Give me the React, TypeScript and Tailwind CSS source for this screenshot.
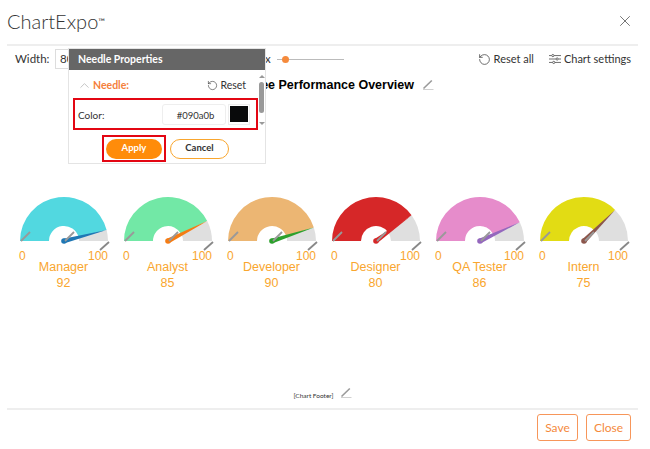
import { RotateCcw, X, ChevronUp } from "lucide-react";

interface GaugeProps {
  name: string;
  value: number;
  color: string;
  needle: string;
}

const gauges: GaugeProps[] = [
  { name: "Manager", value: 92, color: "#52d8e0", needle: "#1f77b4" },
  { name: "Analyst", value: 85, color: "#72e8a6", needle: "#f57c14" },
  { name: "Developer", value: 90, color: "#ecb673", needle: "#2ca02c" },
  { name: "Designer", value: 80, color: "#d62728", needle: "#d62728" },
  { name: "QA Tester", value: 86, color: "#e68ccb", needle: "#9467bd" },
  { name: "Intern", value: 75, color: "#e2dc14", needle: "#8c564b" },
];

const CX = 52;
const CY = 45;
const OUTER = 44;
const INNER = 15;

function point(pct: number, r: number) {
  const a = Math.PI - (pct / 100) * Math.PI;
  return [CX + r * Math.cos(a), CY - r * Math.sin(a)];
}

function arc(from: number, to: number) {
  const [x1, y1] = point(from, OUTER);
  const [x2, y2] = point(to, OUTER);
  const [x3, y3] = point(to, INNER);
  const [x4, y4] = point(from, INNER);
  return `M${x1} ${y1}A${OUTER} ${OUTER} 0 0 1 ${x2} ${y2}L${x3} ${y3}A${INNER} ${INNER} 0 0 0 ${x4} ${y4}Z`;
}

function Pencil({ className }: { className?: string }) {
  return (
    <svg viewBox="0 0 12 12" className={className} fill="none">
      <path d="M1 10.5h10.5" stroke="#c4c4c4" strokeWidth="0.8" />
      <path d="M1.5 9.5 9.8 1.5" stroke="#9a9a9a" strokeWidth="1.6" />
    </svg>
  );
}

function SlidersIcon() {
  return (
    <svg viewBox="0 0 14 13" className="h-[12px] w-[12px]" fill="none" stroke="#444" strokeWidth="0.9">
      <path d="M0 2.5h3M6 2.5h8M0 6.5h8M11 6.5h3M0 10.5h4M7 10.5h7" />
      <circle cx="4.5" cy="2.5" r="1.3" />
      <circle cx="9.5" cy="6.5" r="1.3" />
      <circle cx="5.5" cy="10.5" r="1.3" />
    </svg>
  );
}

function Gauge({ name, value, color, needle }: GaugeProps) {
  const [tx, ty] = point(value, OUTER);
  const a = Math.PI - (value / 100) * Math.PI;
  const nx = Math.sin(a) * 2.4;
  const ny = Math.cos(a) * 2.4;
  return (
    <div className="flex w-[104px] shrink-0 flex-col items-center font-['Liberation_Sans',sans-serif] text-[12.5px] leading-4 text-[#f9a62e]">
      <svg viewBox="0 0 104 56" className="h-14 w-[104px]">
        <path d={arc(0, value)} fill={color} />
        <path d={arc(value, 100)} fill="#dfdfdf" />
        <path d={`M${CX - nx} ${CY - ny}L${tx} ${ty}L${CX + nx} ${CY + ny}Z`} fill={needle} />
        <circle cx={CX} cy={CY} r="2.8" fill={needle} />
        <path d="M9 45 18 36" stroke="#999" strokeWidth="1.8" />
        <path d="M53 45 62 36" stroke="#999" strokeWidth="1.8" />
        <path d="M88 54 97 46" stroke="#888" strokeWidth="1.8" />
      </svg>
      <div className="-mt-[4px] flex w-[89px] justify-between text-[12px]">
        <span>0</span>
        <span>100</span>
      </div>
      <div className="-mt-[5px]">{name}</div>
      <div>{value}</div>
    </div>
  );
}

export default function App() {
  return (
    <div className="relative flex h-[449px] w-[650px] flex-col overflow-hidden bg-white pl-[7px] pr-[12px] font-['Lato',sans-serif] text-[#333]">
      <header className="flex h-[46px] shrink-0 items-center justify-between border-b-2 border-[#eee] pb-[2px]">
        <span className="text-[20px] font-light">
          ChartExpo<sup className="text-[9px] font-normal">™</sup>
        </span>
        <X className="mr-[4px] h-[18px] w-[18px] text-[#666]" strokeWidth={1.2} />
      </header>

      <div className="flex h-[26px] shrink-0 items-center text-[11.5px]">
        <span className="ml-2 w-[40px]">Width:</span>
        <div className="h-5 w-8 border border-[#ddd] pl-1 leading-[18px]">80</div>
        <span className="ml-[178px]">x</span>
        <div className="relative ml-[6px] h-px w-[67px] bg-[#bbb]">
          <span className="absolute -top-[3px] left-[5px] h-[7px] w-[7px] rounded-full bg-[#f58a3c]" />
        </div>
        <div className="ml-auto flex items-center gap-[3px] text-[11px]">
          <RotateCcw className="h-[13px] w-[13px]" strokeWidth={1.3} />
          Reset all
        </div>
        <div className="ml-[15px] mr-[7px] flex items-center gap-[3px] text-[11px]">
          <SlidersIcon />
          Chart settings
        </div>
      </div>

      <div className="mt-[2px] flex h-[22px] shrink-0 items-center justify-center pl-[5px] font-['Liberation_Sans',sans-serif] text-[12.5px] font-bold text-black">
        Employee Performance Overview
        <Pencil className="ml-2 h-3 w-3" />
      </div>

      <div className="mt-[100px] flex shrink-0 pl-[4.5px]">
        {gauges.map((g) => (
          <Gauge key={g.name} {...g} />
        ))}
      </div>

      <div className="mt-auto mb-[3px] flex h-[19px] shrink-0 items-center justify-center text-[6.5px]">
        [Chart Footer]
        <Pencil className="ml-[6px] mb-[5px] h-3 w-3" />
      </div>
      <footer className="flex h-[41px] shrink-0 items-start justify-end gap-2 border-t-2 border-[#eee] pt-[4px] pr-[7px]">
        <button type="button" className="h-[27px] w-[41px] rounded-[3px] border border-[#f7965a] text-[12px] text-[#f58a3c]">
          Save
        </button>
        <button type="button" className="h-[27px] w-[45px] rounded-[3px] border border-[#f7965a] text-[12px] text-[#f58a3c]">
          Close
        </button>
      </footer>

      <div className="absolute left-[68px] top-[48px] h-[116px] w-[198px] border border-[#e4e4e4] bg-white text-[10.5px]">
        <div className="flex h-[21px] items-center bg-[#666] pl-[9px] pt-px font-bold text-white">Needle Properties</div>
        <div className="flex h-[28px] items-center pl-[8px] pr-[19px] pt-[3px]">
          <ChevronUp className="h-[15px] w-[15px] text-[#aaa]" strokeWidth={1.1} />
          <span className="ml-px font-bold text-[#f5803c]">Needle:</span>
          <RotateCcw className="ml-auto h-[11px] w-[11px]" strokeWidth={1.3} />
          <span className="ml-[2px]">Reset</span>
        </div>
        <div className="ml-[4px] flex h-[32px] w-[185px] items-center border-2 border-[#e30613] pl-[3px] text-[10px]">
          <span className="pt-[3px]">Color:</span>
          <div className="ml-auto flex h-[21px] w-[64px] items-end justify-center rounded-[3px] border border-[#eee] pl-[3px] text-[9.5px]">#090a0b</div>
          <div className="ml-[2px] mr-[6px] flex h-[21px] w-[22px] items-center justify-center border border-[#eee]">
            <span className="h-[16px] w-[18px] bg-[#090a0b]" />
          </div>
        </div>
        <div className="mt-[5px] flex items-center pl-[33px] text-[9.5px]">
          <div className="flex h-[27px] w-[64px] items-center justify-center border-2 border-[#e30613]">
            <button type="button" className="h-[20px] w-[56px] rounded-full bg-[#ff8c0a] font-bold text-white">
              Apply
            </button>
          </div>
          <button type="button" className="ml-[4px] h-[20px] w-[59px] rounded-full border border-[#f9a62e] font-bold text-[#333]">
            Cancel
          </button>
        </div>
        <div className="absolute left-[189px] top-[26px] flex h-[56px] w-[7px] flex-col items-center">
          <span className="h-0 w-0 border-x-[3px] border-b-[3px] border-x-transparent border-b-[#999]" />
          <span className="mt-[4px] h-[31px] w-[5px] rounded-sm bg-[#999]" />
          <span className="mt-[9px] h-0 w-0 border-x-[3px] border-t-[3px] border-x-transparent border-t-[#999]" />
        </div>
      </div>
    </div>
  );
}
